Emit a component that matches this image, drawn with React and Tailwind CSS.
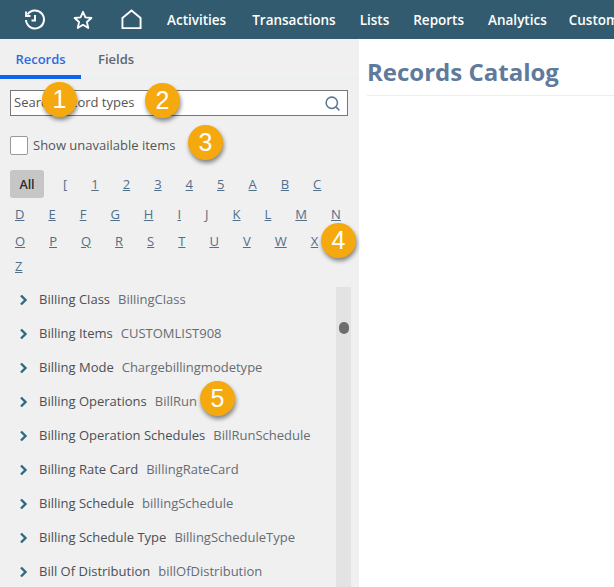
import { Search } from "lucide-react";

const FONT = "font-['Open_Sans',sans-serif]";

const NAV = ["Activities", "Transactions", "Lists", "Reports", "Analytics", "Customization"];

const LETTERS_TOP = ["[", "1", "2", "3", "4", "5", "A", "B", "C"];
const LETTER_ROWS = [
  { gap: "mt-[7px]", items: ["D", "E", "F", "G", "H", "I", "J", "K", "L", "M", "N"] },
  { gap: "mt-[10px]", items: ["O", "P", "Q", "R", "S", "T", "U", "V", "W", "X"] },
  { gap: "mt-[8px]", items: ["Z"] },
];

const RECORDS = [
  ["Billing Class", "BillingClass"],
  ["Billing Items", "CUSTOMLIST908"],
  ["Billing Mode", "Chargebillingmodetype"],
  ["Billing Operations", "BillRun"],
  ["Billing Operation Schedules", "BillRunSchedule"],
  ["Billing Rate Card", "BillingRateCard"],
  ["Billing Schedule", "billingSchedule"],
  ["Billing Schedule Type", "BillingScheduleType"],
  ["Bill Of Distribution", "billOfDistribution"],
];

function Badge({ n, className }) {
  return (
    <div
      className={`absolute flex h-[35px] w-[35px] items-center justify-center rounded-full bg-[#f5a90f] font-['Liberation_Sans',sans-serif] text-[25px] text-white shadow-[1px_3px_4px_rgba(0,0,0,0.45)] ${className}`}
    >
      {n}
    </div>
  );
}

function TopBar() {
  return (
    <header className="flex h-[39px] shrink-0 items-center overflow-hidden bg-[#335b70] pl-[24px]">
      <svg className="shrink-0" width="22" height="22" viewBox="0 0 22 22" fill="none" stroke="white" strokeWidth="2">
        <path d="M3.5 5.5 A9 9 0 1 1 2 11" />
        <path d="M2 2.5 V7 H6.5" strokeWidth="1.8" />
        <path d="M11 6 V11.5 H7.5" />
      </svg>
      <svg className="ml-[27px] shrink-0" width="20" height="20" viewBox="0 0 22 22" fill="none" stroke="white" strokeWidth="2" strokeLinejoin="round">
        <path d="M11 2 L13.7 8.2 L20.3 8.8 L15.3 13.2 L16.8 19.8 L11 16.3 L5.2 19.8 L6.7 13.2 L1.7 8.8 L8.3 8.2 Z" />
      </svg>
      <svg className="ml-[28px] shrink-0" width="21" height="21" viewBox="0 0 22 22" fill="none" stroke="white" strokeWidth="2" strokeLinejoin="miter">
        <path d="M1.5 9.5 L11 1.5 L20.5 9.5 V20 H1.5 Z" />
      </svg>
      <nav className="ml-[25px] flex shrink-0 gap-[24px] whitespace-nowrap pt-[1px] text-[13.5px] font-semibold text-white">
        {NAV.map((item) => (
          <span key={item} className="first:mr-[2px] last:ml-[-2px]">
            {item}
          </span>
        ))}
      </nav>
    </header>
  );
}

function Letters() {
  return (
    <div className="mt-[14px] text-[13px] leading-[17px] text-[#4f6f8a]">
      <div className="flex h-[29px] items-center pl-[10px]">
        <span className="flex h-[28px] w-[34px] items-center justify-center rounded-[3px] bg-[#c6c6c6] text-[12.5px] font-semibold text-[#2b2b2b]">
          All
        </span>
        <div className="ml-[19px] flex gap-[24px] pt-[1px]">
          {LETTERS_TOP.map((l) => (
            <span key={l} className={l === "[" ? "" : "underline"}>
              {l}
            </span>
          ))}
        </div>
      </div>
      {LETTER_ROWS.map((row) => (
        <div key={row.items[0]} className={`${row.gap} flex gap-[24px] pl-[15px]`}>
          {row.items.map((l) => (
            <span key={l} className="underline">
              {l}
            </span>
          ))}
        </div>
      ))}
    </div>
  );
}

function RecordList() {
  return (
    <div className="relative mt-[12px] h-[300px]">
      <div className="h-[292px] translate-y-[8px] overflow-hidden">
        <ul className="mt-[-12px] text-[13px] text-[#555b63]">
          {RECORDS.map(([name, id]) => (
            <li key={name} className="flex h-[34px] items-center pl-[19px]">
              <svg className="shrink-0" width="9" height="12" viewBox="0 0 9 12" fill="none" stroke="#2b6a80" strokeWidth="2.4">
                <path d="M2 1.5 L6.5 6 L2 10.5" />
              </svg>
              <span className="ml-[11px] text-[#4a4f55]">{name}</span>
              <span className="ml-[8px] text-[#666c74]">{id}</span>
            </li>
          ))}
        </ul>
      </div>
      <div className="absolute right-[8px] top-0 h-full w-[15px] bg-[#e3e3e3]">
        <div className="absolute left-[3px] top-[35px] h-[12px] w-[10px] rounded-full bg-[#6e6e6e]" />
      </div>
    </div>
  );
}

export default function App() {
  return (
    <div className={`relative flex h-[587px] w-[614px] flex-col overflow-hidden bg-white ${FONT}`}>
      <TopBar />
      <div className="flex min-h-0 flex-1">
        <aside className="w-[359px] shrink-0 bg-[#f0f0f0]">
          <div className="flex h-[40px] border-b-[1px] border-[#e9eeee] text-[13px] font-semibold">
            <div className="flex h-[40px] w-[81px] items-center justify-center border-b-[4px] border-[#0f63ee] pt-[6px] text-[#2f6ae0]">
              Records
            </div>
            <div className="flex h-[40px] items-center pl-[17px] pt-[2px] text-[#5c6670]">Fields</div>
          </div>
          <div className="ml-[10px] mr-[11px] mt-[11px] flex h-[26px] items-center justify-between border border-[#777] bg-white pl-[3px] pr-[6px] text-[13px] text-[#555]">
            <span>Search record types</span>
            <Search size={17} strokeWidth={2.2} className="text-[#5a7690]" />
          </div>
          <label className="ml-[10px] mt-[20px] flex items-center text-[13px] text-[#555]">
            <span className="h-[19px] w-[18px] rounded-[2px] border border-[#999] bg-white" />
            <span className="ml-[5px]">Show unavailable items</span>
          </label>
          <Letters />
          <RecordList />
        </aside>
        <main className="min-w-0 flex-1 pl-[8px] pt-[16px]">
          <h1 className="border-b border-[#eeeeee] pb-[7px] text-[24px] font-bold leading-[33px] text-[#5f7a9c]">
            Records Catalog
          </h1>
        </main>
      </div>
      <Badge n="1" className="left-[42px] top-[82px]" />
      <Badge n="2" className="left-[145px] top-[83px]" />
      <Badge n="3" className="left-[188px] top-[125px]" />
      <Badge n="4" className="left-[321px] top-[223px]" />
      <Badge n="5" className="left-[200px] top-[381px]" />
    </div>
  );
}
